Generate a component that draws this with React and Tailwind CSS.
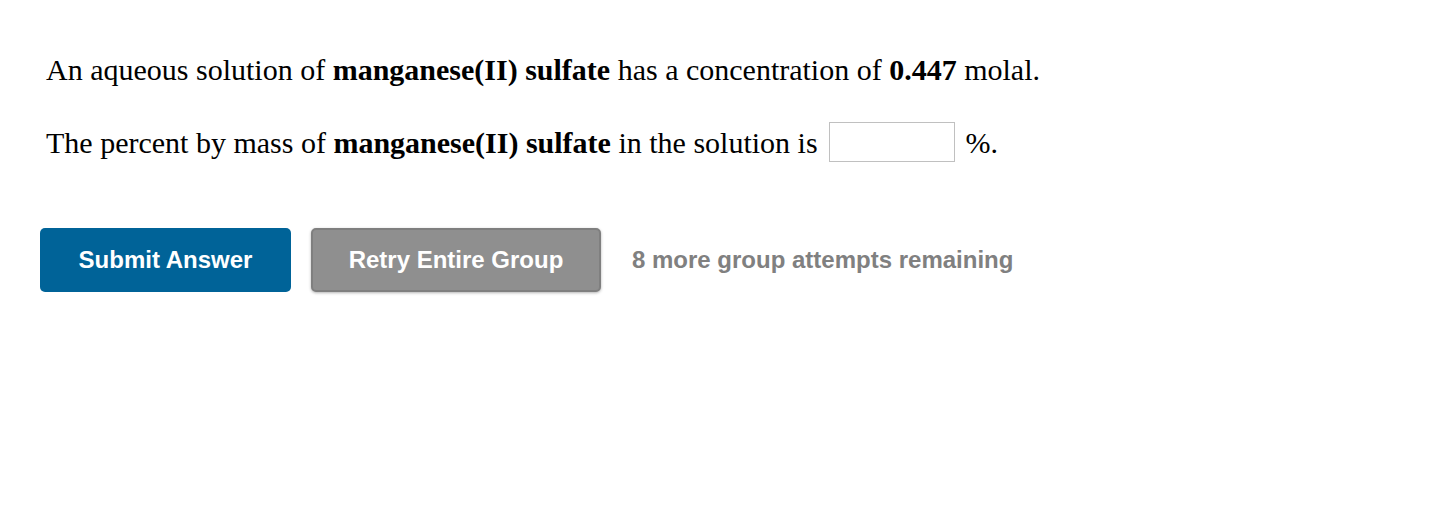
export default function App() {
  return (
    <div className="w-[1442px] h-[524px] bg-white" style={{ fontFamily: '"Liberation Serif", serif' }}>
      <div className="pl-[46px] pt-[50px] text-[30px] leading-[40px] text-black">
        <p>
          An aqueous solution of <b>manganese(II) sulfate</b> has a concentration of <b>0.447</b> molal.
        </p>
        <p className="mt-[33px] flex items-center">
          <span>
            The percent by mass of <b>manganese(II) sulfate</b> in the solution is
          </span>
          <span className="ml-[11px] -mt-[2px] inline-block w-[126px] h-[40px] border border-[#c0c0c0] bg-white"></span>
          <span className="ml-[11px]">%.</span>
        </p>
      </div>
      <div className="flex items-center pl-[40px] mt-[65px]" style={{ fontFamily: '"Liberation Sans", Arial, sans-serif' }}>
        <button className="w-[251px] h-[64px] rounded-[5px] bg-[#006398] text-white font-bold text-[24px]">
          Submit Answer
        </button>
        <button className="ml-[20px] w-[290px] h-[64px] rounded-[5px] bg-[#8f8f8f] border-2 border-[#7f7f7f] text-white font-bold text-[24px] shadow-[0_1px_3px_rgba(0,0,0,0.3)]">
          Retry Entire Group
        </button>
        <span className="ml-[31px] text-[#808080] font-bold text-[24px]">8 more group attempts remaining</span>
      </div>
    </div>
  );
}
